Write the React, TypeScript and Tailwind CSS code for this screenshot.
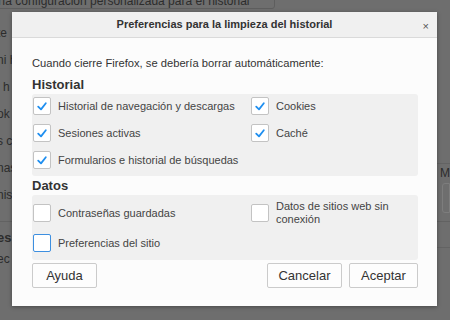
import React from "react";

const font = { fontFamily: '"Liberation Sans", Arial, sans-serif' };

const Check = ({ checked, focused }: { checked?: boolean; focused?: boolean }) => (
  <div
    className={`w-[18px] h-[18px] shrink-0 rounded-[2px] bg-white border ${
      focused ? "border-[#3d8fe0]" : "border-[#c3c3c3]"
    }`}
  >
    {checked && (
      <svg width="16" height="16" viewBox="0 0 16 16">
        <path d="M4.2 8.6 L7 11.4 L11.8 5.2" fill="none" stroke="#1f8ff0" strokeWidth="1.8" strokeLinecap="round" strokeLinejoin="round" />
      </svg>
    )}
  </div>
);

const Option = ({ label, checked, focused }: { label: React.ReactNode; checked?: boolean; focused?: boolean }) => (
  <div className="flex items-center gap-[7px]">
    <Check checked={checked} focused={focused} />
    <span className="text-[11px] leading-[13px] text-[#444]">{label}</span>
  </div>
);

const Button = ({ label, width }: { label: string; width: string }) => (
  <button className={`${width} h-[25px] bg-[#fdfdfd] border border-[#cbcbcb] rounded-[2px] text-[13px] text-[#333]`}>
    {label}
  </button>
);

const App = () => {
  // Page behind the overlay: only fragments are visible
  const sideRows = ["te", "ni h", "l h", "ok", "s c", "nas", "nis"];

  return (
    <div className="relative w-[450px] h-[320px] overflow-hidden bg-[#6e6e6e]" style={font}>
      {/* dimmed page */}
      <div className="text-[#2c2c2c] text-[12px]">
        <div className="flex -mt-[7px] h-[16px]">
          <div className="w-[278px] h-[16px] border border-[#5e5e5e] rounded-[3px] -ml-[3px] leading-[14px]">
            ría configuración personalizada para el historial
          </div>
        </div>
        <div className="flex flex-col pt-[17px] -ml-[3px] leading-[14px]">
          {sideRows.map((r) => (
            <div key={r} className="h-[27px]">{r}</div>
          ))}
        </div>
        <div className="border-t border-[#626262] mt-[6px] pt-[8px] -ml-[3px]">
          <div className="font-bold text-[13px] leading-[15px]">es</div>
          <div className="mt-[7px] leading-[14px]">ec</div>
        </div>
      </div>
      <div className="absolute right-0 top-[163px] w-[13px] h-[85px] border-t border-b border-[#636363] text-[#2c2c2c]">
        <div className="pl-[3px] pt-[2px] text-[12px] leading-[14px]">M</div>
        <div className="ml-[5px] mt-[3px] h-[30px] border border-[#7d7d7d] rounded-l-[3px]" />
      </div>

      {/* dialog */}
      <div className="absolute left-[12px] top-[12px] w-[425px] h-[294px] flex flex-col bg-[#fcfcfc] shadow-[0_1px_4px_rgba(0,0,0,0.35)]">
        <div className="h-[26px] shrink-0 relative flex items-center justify-center bg-[#f0f0f0] border-b border-[#dadada]">
          <span className="text-[11px] font-bold text-[#333]">Preferencias para la limpieza del historial</span>
          <span className="absolute right-[8px] top-[6px] text-[11px] text-[#555]">×</span>
        </div>

        <div className="flex flex-col pl-[20px] pr-[19px] pt-[18px]">
          <div className="text-[11.2px] leading-[15px] text-[#333]">
            Cuando cierre Firefox, se debería borrar automáticamente:
          </div>

          <div className="mt-[5px] text-[13px] leading-[17px] font-bold text-[#333]">Historial</div>
          <div className="mt-[1px] bg-[#f0f0f0] rounded-[3px] pl-[1px] pt-[3px] pb-[7px] grid grid-cols-[218px_1fr] gap-y-[9px]">
            <Option label="Historial de navegación y descargas" checked />
            <Option label="Cookies" checked />
            <Option label="Sesiones activas" checked />
            <Option label="Caché" checked />
            <Option label="Formularios e historial de búsquedas" checked />
          </div>

          <div className="mt-[1px] text-[13px] leading-[17px] font-bold text-[#333]">Datos</div>
          <div className="mt-[1px] bg-[#f0f0f0] rounded-[3px] pl-[1px] pt-[5px] pb-[8px] grid grid-cols-[218px_1fr] gap-y-[8px]">
            <div className="h-[26px] flex items-center">
              <Option label="Contraseñas guardadas" />
            </div>
            <div className="h-[26px] flex items-center">
              <Option label={<>Datos de sitios web sin<br />conexión</>} />
            </div>
            <Option label="Preferencias del sitio" focused />
          </div>

          <div className="mt-[3px] flex items-center">
            <Button label="Ayuda" width="w-[65px]" />
            <div className="flex-1" />
            <div className="flex gap-[7px]">
              <Button label="Cancelar" width="w-[75px]" />
              <Button label="Aceptar" width="w-[69px]" />
            </div>
          </div>
        </div>
      </div>
    </div>
  );
};

export default App;
